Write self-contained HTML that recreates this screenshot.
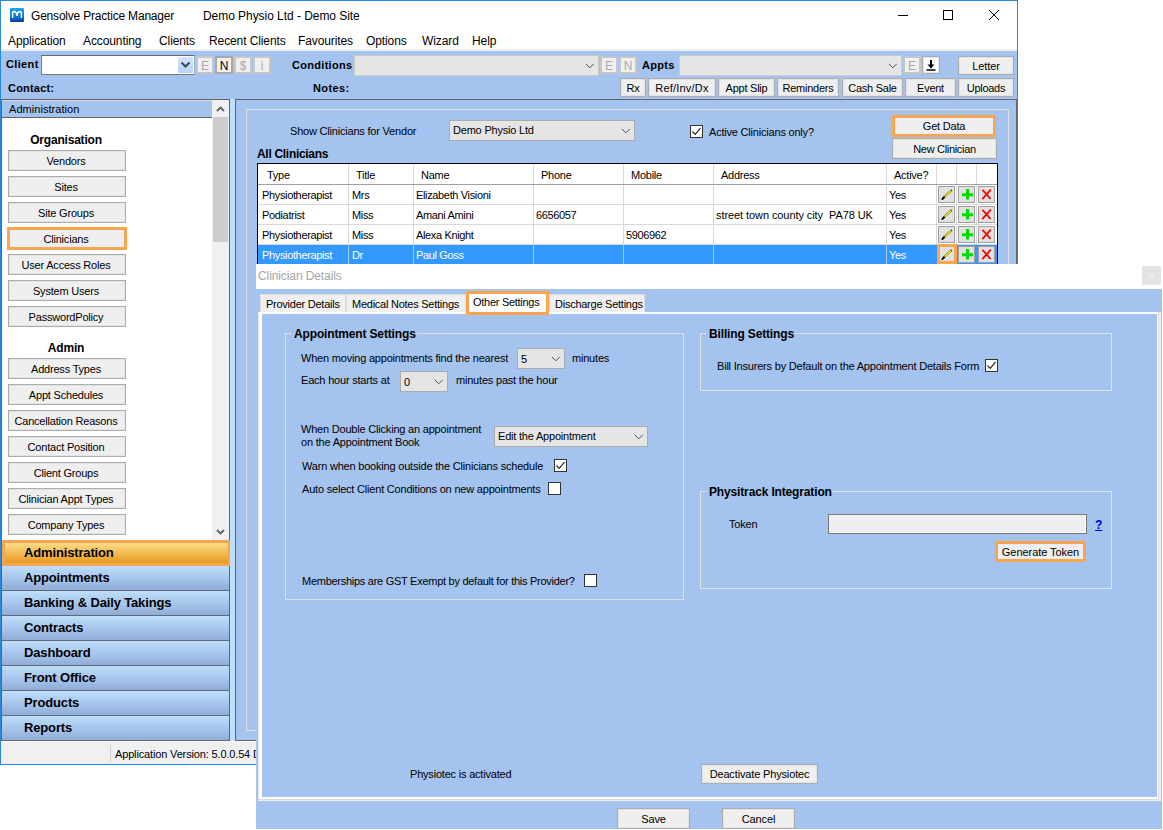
<!DOCTYPE html>
<html><head><meta charset="utf-8"><style>
html,body{margin:0;padding:0;width:1163px;height:830px;overflow:hidden;background:#fff}
body{position:relative;font-family:"Liberation Sans",sans-serif}
body>div,body>svg{position:absolute}
.t{white-space:nowrap}
</style></head><body>
<div style="left:0;top:0;width:1163px;height:830px;background:#fff"></div>
<div style="left:0px;top:0px;width:1018px;height:765px;box-sizing:border-box;border:1px solid #2b87d8;background:#fff"></div>
<svg style="left:10px;top:8px" width="14" height="14" viewBox="0 0 14 14"><defs><linearGradient id="ig" x1="0" y1="0" x2="0" y2="1"><stop offset="0" stop-color="#1ea6ee"/><stop offset="0.8" stop-color="#0a62c0"/><stop offset="1" stop-color="#06338a"/></linearGradient></defs><rect x="0" y="0" width="14" height="14" rx="1.2" fill="url(#ig)"/><path d="M2.6 9.8 L2.6 4.6 Q3.2 3 5 3.6 L7 5.6 L9 3.6 Q10.8 3 11.4 4.6 L11.4 9.8" fill="none" stroke="#fff" stroke-width="1.5"/><circle cx="7" cy="6.8" r="1.2" fill="#f4f4f4"/></svg>
<div class="t" style="left:31px;top:9.84px;font-size:12px;line-height:12px;font-weight:400;color:#000;letter-spacing:-0.2px;">Gensolve Practice Manager</div>
<div class="t" style="left:203px;top:9.84px;font-size:12px;line-height:12px;font-weight:400;color:#000;letter-spacing:-0.05px;">Demo Physio Ltd - Demo Site</div>
<div style="left:898px;top:15px;width:10px;height:1px;background:#000"></div>
<div style="left:943px;top:10px;width:10px;height:10px;box-sizing:border-box;border:1px solid #000"></div>
<svg style="left:988px;top:9px" width="12" height="12" viewBox="0 0 12 12"><path d="M1 1 L11 11 M11 1 L1 11" stroke="#000" stroke-width="1"/></svg>
<div class="t" style="left:8px;top:34.84px;font-size:12px;line-height:12px;font-weight:400;color:#000;letter-spacing:-0.1px;">Application</div>
<div class="t" style="left:83px;top:34.84px;font-size:12px;line-height:12px;font-weight:400;color:#000;letter-spacing:-0.1px;">Accounting</div>
<div class="t" style="left:159px;top:34.84px;font-size:12px;line-height:12px;font-weight:400;color:#000;letter-spacing:-0.1px;">Clients</div>
<div class="t" style="left:209px;top:34.84px;font-size:12px;line-height:12px;font-weight:400;color:#000;letter-spacing:-0.1px;">Recent Clients</div>
<div class="t" style="left:298px;top:34.84px;font-size:12px;line-height:12px;font-weight:400;color:#000;letter-spacing:-0.1px;">Favourites</div>
<div class="t" style="left:366px;top:34.84px;font-size:12px;line-height:12px;font-weight:400;color:#000;letter-spacing:-0.1px;">Options</div>
<div class="t" style="left:422px;top:34.84px;font-size:12px;line-height:12px;font-weight:400;color:#000;letter-spacing:-0.1px;">Wizard</div>
<div class="t" style="left:472px;top:34.84px;font-size:12px;line-height:12px;font-weight:400;color:#000;letter-spacing:-0.1px;">Help</div>
<div style="left:1px;top:49px;width:1016px;height:2px;background:#eeeeee"></div>
<div style="left:1px;top:51px;width:1016px;height:48px;background:#a4c3ee"></div>
<div class="t" style="left:6px;top:58.69px;font-size:11px;line-height:11px;font-weight:700;color:#000;letter-spacing:0.35px;">Client</div>
<div style="left:41px;top:55px;width:154px;height:20px;box-sizing:border-box;border:1px solid #7a7a7a;border-right-color:#7eb4ea;border-top-color:#6a6a6a;background:#fff"></div>
<div style="left:178px;top:57px;width:15px;height:16px;background:linear-gradient(#d6e5fa,#b9d1f5);border-radius:1px"></div>
<svg style="left:180px;top:61px" width="11" height="8" viewBox="0 0 11 8"><path d="M1.5 1.5 L5.5 5.5 L9.5 1.5" fill="none" stroke="#3d4a5c" stroke-width="2"/></svg>
<div style="left:196px;top:56px;width:18px;height:18px;box-sizing:border-box;border:2px solid #c6c6c6;background:#f0f0f0"></div>
<div class="t" style="left:5px;width:400px;text-align:center;top:59.84px;font-size:12px;line-height:12px;font-weight:400;color:#a8a8a8;letter-spacing:0px;">E</div>
<div style="left:215px;top:56px;width:18px;height:18px;box-sizing:border-box;border:2px solid #a9a9a9;background:#f0f0f0"></div>
<div class="t" style="left:24px;width:400px;text-align:center;top:59.84px;font-size:12px;line-height:12px;font-weight:400;color:#000;letter-spacing:0px;">N</div>
<div style="left:234px;top:56px;width:18px;height:18px;box-sizing:border-box;border:2px solid #c6c6c6;background:#f0f0f0"></div>
<div class="t" style="left:43px;width:400px;text-align:center;top:59.84px;font-size:12px;line-height:12px;font-weight:400;color:#a8a8a8;letter-spacing:0px;">$</div>
<div style="left:253px;top:56px;width:18px;height:18px;box-sizing:border-box;border:2px solid #c6c6c6;background:#f0f0f0"></div>
<div class="t" style="left:62px;width:400px;text-align:center;top:59.84px;font-size:12px;line-height:12px;font-weight:400;color:#a8a8a8;letter-spacing:0px;">i</div>
<div class="t" style="left:292px;top:59.69px;font-size:11px;line-height:11px;font-weight:700;color:#000;letter-spacing:0.3px;">Conditions</div>
<div style="left:354px;top:55px;width:245px;height:21px;box-sizing:border-box;border:1px solid #cccccc;background:#e5e5e5"></div>
<svg style="left:585px;top:63px" width="10" height="6" viewBox="0 0 10 6"><path d="M0.8 0.8 L4.8 4.8 L8.8 0.8" fill="none" stroke="#505050" stroke-width="1"/></svg>
<div style="left:600px;top:56px;width:18px;height:18px;box-sizing:border-box;border:2px solid #c6c6c6;background:#f0f0f0"></div>
<div class="t" style="left:409px;width:400px;text-align:center;top:59.84px;font-size:12px;line-height:12px;font-weight:400;color:#a8a8a8;letter-spacing:0px;">E</div>
<div style="left:619px;top:56px;width:18px;height:18px;box-sizing:border-box;border:2px solid #c6c6c6;background:#f0f0f0"></div>
<div class="t" style="left:428px;width:400px;text-align:center;top:59.84px;font-size:12px;line-height:12px;font-weight:400;color:#a8a8a8;letter-spacing:0px;">N</div>
<div class="t" style="left:642px;top:59.69px;font-size:11px;line-height:11px;font-weight:700;color:#000;letter-spacing:0.3px;">Appts</div>
<div style="left:679px;top:55px;width:223px;height:21px;box-sizing:border-box;border:1px solid #cccccc;background:#e5e5e5"></div>
<svg style="left:888px;top:63px" width="10" height="6" viewBox="0 0 10 6"><path d="M0.8 0.8 L4.8 4.8 L8.8 0.8" fill="none" stroke="#505050" stroke-width="1"/></svg>
<div style="left:903px;top:56px;width:18px;height:18px;box-sizing:border-box;border:2px solid #c6c6c6;background:#f0f0f0"></div>
<div class="t" style="left:712px;width:400px;text-align:center;top:59.84px;font-size:12px;line-height:12px;font-weight:400;color:#a8a8a8;letter-spacing:0px;">E</div>
<div style="left:922px;top:56px;width:18px;height:18px;box-sizing:border-box;border:1px solid #adadad;background:#fff;box-shadow:inset 0 0 0 1px #e6e6e6"></div>
<svg style="left:924px;top:58px" width="14" height="14" viewBox="0 0 14 14"><path d="M7 2 V10" stroke="#000" stroke-width="2"/><path d="M3.5 6.5 L7 10.5 L10.5 6.5 Z" fill="#000"/><path d="M2.5 12 H11.5" stroke="#000" stroke-width="1.5"/></svg>
<div style="left:958px;top:56px;width:56px;height:19px;box-sizing:border-box;border:1px solid #adadad;background:#efefef;box-shadow:inset 0 0 0 1px #e3e3e3"></div>
<div class="t" style="left:786.0px;width:400px;text-align:center;top:60.69px;font-size:11px;line-height:11px;font-weight:400;color:#000;letter-spacing:-0.1px;">Letter</div>
<div class="t" style="left:8px;top:82.69px;font-size:11px;line-height:11px;font-weight:700;color:#000;letter-spacing:0.2px;">Contact:</div>
<div class="t" style="left:313px;top:82.69px;font-size:11px;line-height:11px;font-weight:700;color:#000;letter-spacing:0.4px;">Notes:</div>
<div style="left:620px;top:78px;width:26px;height:19px;box-sizing:border-box;border:1px solid #adadad;background:#efefef;box-shadow:inset 0 0 0 1px #e3e3e3"></div>
<div class="t" style="left:433.0px;width:400px;text-align:center;top:82.69px;font-size:11px;line-height:11px;font-weight:400;color:#000;letter-spacing:-0.25px;">Rx</div>
<div style="left:648px;top:78px;width:68px;height:19px;box-sizing:border-box;border:1px solid #adadad;background:#efefef;box-shadow:inset 0 0 0 1px #e3e3e3"></div>
<div class="t" style="left:482.0px;width:400px;text-align:center;top:82.69px;font-size:11px;line-height:11px;font-weight:400;color:#000;letter-spacing:0.2px;">Ref/Inv/Dx</div>
<div style="left:718px;top:78px;width:57px;height:19px;box-sizing:border-box;border:1px solid #adadad;background:#efefef;box-shadow:inset 0 0 0 1px #e3e3e3"></div>
<div class="t" style="left:546.5px;width:400px;text-align:center;top:82.69px;font-size:11px;line-height:11px;font-weight:400;color:#000;letter-spacing:-0.25px;">Appt Slip</div>
<div style="left:777px;top:78px;width:62px;height:19px;box-sizing:border-box;border:1px solid #adadad;background:#efefef;box-shadow:inset 0 0 0 1px #e3e3e3"></div>
<div class="t" style="left:608.0px;width:400px;text-align:center;top:82.69px;font-size:11px;line-height:11px;font-weight:400;color:#000;letter-spacing:-0.25px;">Reminders</div>
<div style="left:842px;top:78px;width:61px;height:19px;box-sizing:border-box;border:1px solid #adadad;background:#efefef;box-shadow:inset 0 0 0 1px #e3e3e3"></div>
<div class="t" style="left:672.5px;width:400px;text-align:center;top:82.69px;font-size:11px;line-height:11px;font-weight:400;color:#000;letter-spacing:-0.25px;">Cash Sale</div>
<div style="left:905px;top:78px;width:51px;height:19px;box-sizing:border-box;border:1px solid #adadad;background:#efefef;box-shadow:inset 0 0 0 1px #e3e3e3"></div>
<div class="t" style="left:730.5px;width:400px;text-align:center;top:82.69px;font-size:11px;line-height:11px;font-weight:400;color:#000;letter-spacing:-0.25px;">Event</div>
<div style="left:958px;top:78px;width:56px;height:19px;box-sizing:border-box;border:1px solid #adadad;background:#efefef;box-shadow:inset 0 0 0 1px #e3e3e3"></div>
<div class="t" style="left:786.0px;width:400px;text-align:center;top:82.69px;font-size:11px;line-height:11px;font-weight:400;color:#000;letter-spacing:-0.3px;">Uploads</div>
<div style="left:1px;top:99px;width:229px;height:642px;box-sizing:border-box;border:1px solid #646464;border-right-color:#646464;background:#fff"></div>
<div style="left:2px;top:100px;width:210px;height:17px;background:#a4c3ee"></div>
<div style="left:2px;top:117px;width:210px;height:1px;background:#646464"></div>
<div style="left:2px;top:100px;width:210px;height:1px;background:#d6dbe2"></div>
<div class="t" style="left:9px;top:103.69px;font-size:11px;line-height:11px;font-weight:400;color:#000;letter-spacing:0.05px;">Administration</div>
<div style="left:212px;top:100px;width:17px;height:440px;background:#f0f0f0"></div>
<div style="left:213px;top:117px;width:15px;height:125px;background:#cdcdcd"></div>
<svg style="left:215px;top:105px" width="11" height="8" viewBox="0 0 11 8"><path d="M2 6 L5.5 2.5 L9 6" fill="none" stroke="#606060" stroke-width="1.8"/></svg>
<svg style="left:215px;top:528px" width="11" height="8" viewBox="0 0 11 8"><path d="M2 2 L5.5 5.5 L9 2" fill="none" stroke="#606060" stroke-width="1.8"/></svg>
<div class="t" style="left:-134px;width:400px;text-align:center;top:133.84px;font-size:12px;line-height:12px;font-weight:700;color:#000;letter-spacing:-0.2px;">Organisation</div>
<div style="left:8px;top:150px;width:118px;height:21px;box-sizing:border-box;border:1px solid #adadad;background:#efefef;box-shadow:inset 0 0 0 1px #e3e3e3"></div>
<div class="t" style="left:-134.0px;width:400px;text-align:center;top:155.69px;font-size:11px;line-height:11px;font-weight:400;color:#000;letter-spacing:-0.2px;">Vendors</div>
<div style="left:8px;top:176px;width:118px;height:21px;box-sizing:border-box;border:1px solid #adadad;background:#efefef;box-shadow:inset 0 0 0 1px #e3e3e3"></div>
<div class="t" style="left:-134.0px;width:400px;text-align:center;top:181.69px;font-size:11px;line-height:11px;font-weight:400;color:#000;letter-spacing:-0.2px;">Sites</div>
<div style="left:8px;top:202px;width:118px;height:21px;box-sizing:border-box;border:1px solid #adadad;background:#efefef;box-shadow:inset 0 0 0 1px #e3e3e3"></div>
<div class="t" style="left:-134.0px;width:400px;text-align:center;top:207.69px;font-size:11px;line-height:11px;font-weight:400;color:#000;letter-spacing:-0.2px;">Site Groups</div>
<div style="left:7px;top:227px;width:120px;height:23px;box-sizing:border-box;border:3px solid #fba54f;background:#efefef;box-shadow:inset 0 0 0 1px #e6edf6"></div>
<div class="t" style="left:-134.0px;width:400px;text-align:center;top:233.69px;font-size:11px;line-height:11px;font-weight:400;color:#000;letter-spacing:-0.2px;">Clinicians</div>
<div style="left:8px;top:254px;width:118px;height:21px;box-sizing:border-box;border:1px solid #adadad;background:#efefef;box-shadow:inset 0 0 0 1px #e3e3e3"></div>
<div class="t" style="left:-134.0px;width:400px;text-align:center;top:259.69px;font-size:11px;line-height:11px;font-weight:400;color:#000;letter-spacing:-0.2px;">User Access Roles</div>
<div style="left:8px;top:280px;width:118px;height:21px;box-sizing:border-box;border:1px solid #adadad;background:#efefef;box-shadow:inset 0 0 0 1px #e3e3e3"></div>
<div class="t" style="left:-134.0px;width:400px;text-align:center;top:285.69px;font-size:11px;line-height:11px;font-weight:400;color:#000;letter-spacing:-0.2px;">System Users</div>
<div style="left:8px;top:306px;width:118px;height:21px;box-sizing:border-box;border:1px solid #adadad;background:#efefef;box-shadow:inset 0 0 0 1px #e3e3e3"></div>
<div class="t" style="left:-134.0px;width:400px;text-align:center;top:311.69px;font-size:11px;line-height:11px;font-weight:400;color:#000;letter-spacing:-0.2px;">PasswordPolicy</div>
<div class="t" style="left:-134px;width:400px;text-align:center;top:341.84px;font-size:12px;line-height:12px;font-weight:700;color:#000;letter-spacing:-0.2px;">Admin</div>
<div style="left:8px;top:358px;width:118px;height:21px;box-sizing:border-box;border:1px solid #adadad;background:#efefef;box-shadow:inset 0 0 0 1px #e3e3e3"></div>
<div class="t" style="left:-134.0px;width:400px;text-align:center;top:363.69px;font-size:11px;line-height:11px;font-weight:400;color:#000;letter-spacing:-0.2px;">Address Types</div>
<div style="left:8px;top:384px;width:118px;height:21px;box-sizing:border-box;border:1px solid #adadad;background:#efefef;box-shadow:inset 0 0 0 1px #e3e3e3"></div>
<div class="t" style="left:-134.0px;width:400px;text-align:center;top:389.69px;font-size:11px;line-height:11px;font-weight:400;color:#000;letter-spacing:-0.2px;">Appt Schedules</div>
<div style="left:8px;top:410px;width:118px;height:21px;box-sizing:border-box;border:1px solid #adadad;background:#efefef;box-shadow:inset 0 0 0 1px #e3e3e3"></div>
<div class="t" style="left:-134.0px;width:400px;text-align:center;top:415.69px;font-size:11px;line-height:11px;font-weight:400;color:#000;letter-spacing:-0.2px;">Cancellation Reasons</div>
<div style="left:8px;top:436px;width:118px;height:21px;box-sizing:border-box;border:1px solid #adadad;background:#efefef;box-shadow:inset 0 0 0 1px #e3e3e3"></div>
<div class="t" style="left:-134.0px;width:400px;text-align:center;top:441.69px;font-size:11px;line-height:11px;font-weight:400;color:#000;letter-spacing:-0.2px;">Contact Position</div>
<div style="left:8px;top:462px;width:118px;height:21px;box-sizing:border-box;border:1px solid #adadad;background:#efefef;box-shadow:inset 0 0 0 1px #e3e3e3"></div>
<div class="t" style="left:-134.0px;width:400px;text-align:center;top:467.69px;font-size:11px;line-height:11px;font-weight:400;color:#000;letter-spacing:-0.2px;">Client Groups</div>
<div style="left:8px;top:488px;width:118px;height:21px;box-sizing:border-box;border:1px solid #adadad;background:#efefef;box-shadow:inset 0 0 0 1px #e3e3e3"></div>
<div class="t" style="left:-134.0px;width:400px;text-align:center;top:493.69px;font-size:11px;line-height:11px;font-weight:400;color:#000;letter-spacing:-0.2px;">Clinician Appt Types</div>
<div style="left:8px;top:514px;width:118px;height:21px;box-sizing:border-box;border:1px solid #adadad;background:#efefef;box-shadow:inset 0 0 0 1px #e3e3e3"></div>
<div class="t" style="left:-134.0px;width:400px;text-align:center;top:519.69px;font-size:11px;line-height:11px;font-weight:400;color:#000;letter-spacing:-0.2px;">Company Types</div>
<div style="left:2px;top:540px;width:229px;height:26px;background:#f8a552"></div>
<div style="left:5px;top:543px;width:223px;height:20px;background:linear-gradient(#fbdc8a,#f0b548 60%,#e89a20)"></div>
<div class="t" style="left:24px;top:546.00px;font-size:13px;line-height:13px;font-weight:700;color:#000;letter-spacing:-0.15px;">Administration</div>
<div style="left:2px;top:566px;width:227px;height:24px;background:linear-gradient(#bedef9,#a6c4ec 55%,#91acd6)"></div>
<div style="left:2px;top:590px;width:227px;height:1px;background:#5d6b7d"></div>
<div class="t" style="left:24px;top:571.00px;font-size:13px;line-height:13px;font-weight:700;color:#000;letter-spacing:-0.15px;">Appointments</div>
<div style="left:2px;top:591px;width:227px;height:24px;background:linear-gradient(#bedef9,#a6c4ec 55%,#91acd6)"></div>
<div style="left:2px;top:615px;width:227px;height:1px;background:#5d6b7d"></div>
<div class="t" style="left:24px;top:596.00px;font-size:13px;line-height:13px;font-weight:700;color:#000;letter-spacing:-0.15px;">Banking &amp; Daily Takings</div>
<div style="left:2px;top:616px;width:227px;height:24px;background:linear-gradient(#bedef9,#a6c4ec 55%,#91acd6)"></div>
<div style="left:2px;top:640px;width:227px;height:1px;background:#5d6b7d"></div>
<div class="t" style="left:24px;top:621.00px;font-size:13px;line-height:13px;font-weight:700;color:#000;letter-spacing:-0.15px;">Contracts</div>
<div style="left:2px;top:641px;width:227px;height:24px;background:linear-gradient(#bedef9,#a6c4ec 55%,#91acd6)"></div>
<div style="left:2px;top:665px;width:227px;height:1px;background:#5d6b7d"></div>
<div class="t" style="left:24px;top:646.00px;font-size:13px;line-height:13px;font-weight:700;color:#000;letter-spacing:-0.15px;">Dashboard</div>
<div style="left:2px;top:666px;width:227px;height:24px;background:linear-gradient(#bedef9,#a6c4ec 55%,#91acd6)"></div>
<div style="left:2px;top:690px;width:227px;height:1px;background:#5d6b7d"></div>
<div class="t" style="left:24px;top:671.00px;font-size:13px;line-height:13px;font-weight:700;color:#000;letter-spacing:-0.15px;">Front Office</div>
<div style="left:2px;top:691px;width:227px;height:24px;background:linear-gradient(#bedef9,#a6c4ec 55%,#91acd6)"></div>
<div style="left:2px;top:715px;width:227px;height:1px;background:#5d6b7d"></div>
<div class="t" style="left:24px;top:696.00px;font-size:13px;line-height:13px;font-weight:700;color:#000;letter-spacing:-0.15px;">Products</div>
<div style="left:2px;top:716px;width:227px;height:24px;background:linear-gradient(#bedef9,#a6c4ec 55%,#91acd6)"></div>
<div style="left:2px;top:740px;width:227px;height:1px;background:#5d6b7d"></div>
<div class="t" style="left:24px;top:721.00px;font-size:13px;line-height:13px;font-weight:700;color:#000;letter-spacing:-0.15px;">Reports</div>
<div style="left:230px;top:99px;width:5px;height:642px;background:#bee0fa"></div>
<div style="left:1px;top:741px;width:1016px;height:23px;background:#f0f0f0"></div>
<div style="left:1px;top:741px;width:1016px;height:1px;background:#fbfbfb"></div>
<div style="left:110px;top:745px;width:1px;height:17px;background:#d0d0d0"></div>
<div class="t" style="left:115px;top:748.69px;font-size:11px;line-height:11px;font-weight:400;color:#000;letter-spacing:-0.15px;">Application Version: 5.0.0.54 D</div>
<div style="left:235px;top:99px;width:782px;height:642px;box-sizing:border-box;border:1px solid #646464;background:#a4c3ee"></div>
<div style="left:246px;top:109px;width:763px;height:622px;box-sizing:border-box;border:1px solid #dfdfdd"></div>
<div class="t" style="left:290px;top:125.69px;font-size:11px;line-height:11px;font-weight:400;color:#000;letter-spacing:-0.2px;">Show Clinicians for Vendor</div>
<div style="left:449px;top:120px;width:186px;height:21px;box-sizing:border-box;border:1px solid #acacac;background:#e5e5e5"></div>
<div class="t" style="left:453px;top:124.69px;font-size:11px;line-height:11px;font-weight:400;color:#000;letter-spacing:-0.2px;">Demo Physio Ltd</div>
<svg style="left:621px;top:128px" width="10" height="6" viewBox="0 0 10 6"><path d="M0.8 0.8 L4.8 4.8 L8.8 0.8" fill="none" stroke="#505050" stroke-width="1"/></svg>
<div style="left:690px;top:125px;width:13px;height:13px;box-sizing:border-box;border:1px solid #333;background:#fff"></div>
<svg style="left:690px;top:125px" width="13" height="13" viewBox="0 0 13 13"><path d="M2.5 6.5 L5.2 9.3 L10.5 3.2" fill="none" stroke="#222" stroke-width="1.2"/></svg>
<div class="t" style="left:709px;top:126.69px;font-size:11px;line-height:11px;font-weight:400;color:#000;letter-spacing:-0.2px;">Active Clinicians only?</div>
<div style="left:892px;top:115px;width:104px;height:22px;box-sizing:border-box;border:3px solid #fba54f;background:#efefef;box-shadow:inset 0 0 0 1px #e6edf6"></div>
<div class="t" style="left:744.0px;width:400px;text-align:center;top:120.69px;font-size:11px;line-height:11px;font-weight:400;color:#000;letter-spacing:-0.2px;">Get Data</div>
<div style="left:892px;top:138px;width:105px;height:21px;box-sizing:border-box;border:1px solid #adadad;background:#efefef;box-shadow:inset 0 0 0 1px #e3e3e3"></div>
<div class="t" style="left:744.5px;width:400px;text-align:center;top:143.69px;font-size:11px;line-height:11px;font-weight:400;color:#000;letter-spacing:-0.32px;">New Clinician</div>
<div class="t" style="left:257px;top:147.84px;font-size:12px;line-height:12px;font-weight:700;color:#000;letter-spacing:-0.3px;">All Clinicians</div>
<div style="left:257px;top:163px;width:741px;height:101px;background:#000"></div>
<div style="left:258px;top:164px;width:739px;height:100px;background:#fff"></div>
<div style="left:348px;top:164px;width:1px;height:100px;background:#d9d9d9"></div>
<div style="left:413px;top:164px;width:1px;height:100px;background:#d9d9d9"></div>
<div style="left:533px;top:164px;width:1px;height:100px;background:#d9d9d9"></div>
<div style="left:623px;top:164px;width:1px;height:100px;background:#d9d9d9"></div>
<div style="left:713px;top:164px;width:1px;height:100px;background:#d9d9d9"></div>
<div style="left:886px;top:164px;width:1px;height:100px;background:#d9d9d9"></div>
<div style="left:936px;top:164px;width:1px;height:100px;background:#d9d9d9"></div>
<div style="left:956px;top:164px;width:1px;height:100px;background:#d9d9d9"></div>
<div style="left:976px;top:164px;width:1px;height:100px;background:#d9d9d9"></div>
<div style="left:258px;top:184px;width:739px;height:1px;background:#a0a0a0"></div>
<div style="left:258px;top:204px;width:739px;height:1px;background:#d9d9d9"></div>
<div style="left:258px;top:224px;width:739px;height:1px;background:#d9d9d9"></div>
<div style="left:258px;top:244px;width:739px;height:1px;background:#d9d9d9"></div>
<div style="left:258px;top:245px;width:739px;height:19px;background:#3399ff"></div>
<div style="left:348px;top:245px;width:1px;height:19px;background:#a8c9ee"></div>
<div style="left:413px;top:245px;width:1px;height:19px;background:#a8c9ee"></div>
<div style="left:533px;top:245px;width:1px;height:19px;background:#a8c9ee"></div>
<div style="left:623px;top:245px;width:1px;height:19px;background:#a8c9ee"></div>
<div style="left:713px;top:245px;width:1px;height:19px;background:#a8c9ee"></div>
<div style="left:886px;top:245px;width:1px;height:19px;background:#a8c9ee"></div>
<div class="t" style="left:267px;top:169.69px;font-size:11px;line-height:11px;font-weight:400;color:#000;letter-spacing:-0.25px;">Type</div>
<div class="t" style="left:356px;top:169.69px;font-size:11px;line-height:11px;font-weight:400;color:#000;letter-spacing:-0.25px;">Title</div>
<div class="t" style="left:421px;top:169.69px;font-size:11px;line-height:11px;font-weight:400;color:#000;letter-spacing:-0.25px;">Name</div>
<div class="t" style="left:541px;top:169.69px;font-size:11px;line-height:11px;font-weight:400;color:#000;letter-spacing:-0.25px;">Phone</div>
<div class="t" style="left:631px;top:169.69px;font-size:11px;line-height:11px;font-weight:400;color:#000;letter-spacing:-0.25px;">Mobile</div>
<div class="t" style="left:721px;top:169.69px;font-size:11px;line-height:11px;font-weight:400;color:#000;letter-spacing:-0.25px;">Address</div>
<div class="t" style="left:894px;top:169.69px;font-size:11px;line-height:11px;font-weight:400;color:#000;letter-spacing:-0.25px;">Active?</div>
<div class="t" style="left:262px;top:189.69px;font-size:11px;line-height:11px;font-weight:400;color:#000;letter-spacing:-0.35px;">Physiotherapist</div>
<div class="t" style="left:352px;top:189.69px;font-size:11px;line-height:11px;font-weight:400;color:#000;letter-spacing:-0.35px;">Mrs</div>
<div class="t" style="left:416px;top:189.69px;font-size:11px;line-height:11px;font-weight:400;color:#000;letter-spacing:-0.35px;">Elizabeth Visioni</div>
<div class="t" style="left:889px;top:189.69px;font-size:11px;line-height:11px;font-weight:400;color:#000;letter-spacing:-0.35px;">Yes</div>
<div style="left:938px;top:186px;width:17px;height:17px;box-sizing:border-box;border:1px solid #a0a0a0;background:#e1e1e1"></div>
<div style="left:958px;top:186px;width:17px;height:17px;box-sizing:border-box;border:1px solid #a0a0a0;background:#e1e1e1"></div>
<div style="left:978px;top:186px;width:17px;height:17px;box-sizing:border-box;border:1px solid #a0a0a0;background:#e1e1e1"></div>
<svg style="left:938px;top:186px" width="17" height="17" viewBox="0 0 17 17"><path d="M5.6 11.5 L13.2 4.5" stroke="#505040" stroke-width="2.1" stroke-linecap="round"/><path d="M6.1 11 L13 4.7" stroke="#f8f000" stroke-width="1.3"/><path d="M4.3 13.1 L6.1 11.3" stroke="#000" stroke-width="1.8" stroke-linecap="round"/></svg>
<svg style="left:958px;top:186px" width="17" height="17" viewBox="0 0 17 17"><path d="M9.5 3 V13.6 M4 8.8 H15" stroke="#00dc00" stroke-width="3"/></svg>
<svg style="left:978px;top:186px" width="17" height="17" viewBox="0 0 17 17"><path d="M4.4 3.9 Q8.5 8 12.5 13 M12.8 3.7 Q8.6 8.4 4.3 13.1" fill="none" stroke="#ff0000" stroke-width="1.8"/></svg>
<div class="t" style="left:262px;top:209.69px;font-size:11px;line-height:11px;font-weight:400;color:#000;letter-spacing:-0.35px;">Podiatrist</div>
<div class="t" style="left:352px;top:209.69px;font-size:11px;line-height:11px;font-weight:400;color:#000;letter-spacing:-0.35px;">Miss</div>
<div class="t" style="left:416px;top:209.69px;font-size:11px;line-height:11px;font-weight:400;color:#000;letter-spacing:-0.35px;">Amani Amini</div>
<div class="t" style="left:536px;top:209.69px;font-size:11px;line-height:11px;font-weight:400;color:#000;letter-spacing:-0.35px;">6656057</div>
<div class="t" style="left:716px;top:209.69px;font-size:11px;line-height:11px;font-weight:400;color:#000;letter-spacing:-0.08px;">street town county city&nbsp; PA78 UK</div>
<div class="t" style="left:889px;top:209.69px;font-size:11px;line-height:11px;font-weight:400;color:#000;letter-spacing:-0.35px;">Yes</div>
<div style="left:938px;top:206px;width:17px;height:17px;box-sizing:border-box;border:1px solid #a0a0a0;background:#e1e1e1"></div>
<div style="left:958px;top:206px;width:17px;height:17px;box-sizing:border-box;border:1px solid #a0a0a0;background:#e1e1e1"></div>
<div style="left:978px;top:206px;width:17px;height:17px;box-sizing:border-box;border:1px solid #a0a0a0;background:#e1e1e1"></div>
<svg style="left:938px;top:206px" width="17" height="17" viewBox="0 0 17 17"><path d="M5.6 11.5 L13.2 4.5" stroke="#505040" stroke-width="2.1" stroke-linecap="round"/><path d="M6.1 11 L13 4.7" stroke="#f8f000" stroke-width="1.3"/><path d="M4.3 13.1 L6.1 11.3" stroke="#000" stroke-width="1.8" stroke-linecap="round"/></svg>
<svg style="left:958px;top:206px" width="17" height="17" viewBox="0 0 17 17"><path d="M9.5 3 V13.6 M4 8.8 H15" stroke="#00dc00" stroke-width="3"/></svg>
<svg style="left:978px;top:206px" width="17" height="17" viewBox="0 0 17 17"><path d="M4.4 3.9 Q8.5 8 12.5 13 M12.8 3.7 Q8.6 8.4 4.3 13.1" fill="none" stroke="#ff0000" stroke-width="1.8"/></svg>
<div class="t" style="left:262px;top:229.69px;font-size:11px;line-height:11px;font-weight:400;color:#000;letter-spacing:-0.35px;">Physiotherapist</div>
<div class="t" style="left:352px;top:229.69px;font-size:11px;line-height:11px;font-weight:400;color:#000;letter-spacing:-0.35px;">Miss</div>
<div class="t" style="left:416px;top:229.69px;font-size:11px;line-height:11px;font-weight:400;color:#000;letter-spacing:-0.35px;">Alexa Knight</div>
<div class="t" style="left:626px;top:229.69px;font-size:11px;line-height:11px;font-weight:400;color:#000;letter-spacing:-0.35px;">5906962</div>
<div class="t" style="left:889px;top:229.69px;font-size:11px;line-height:11px;font-weight:400;color:#000;letter-spacing:-0.35px;">Yes</div>
<div style="left:938px;top:226px;width:17px;height:17px;box-sizing:border-box;border:1px solid #a0a0a0;background:#e1e1e1"></div>
<div style="left:958px;top:226px;width:17px;height:17px;box-sizing:border-box;border:1px solid #a0a0a0;background:#e1e1e1"></div>
<div style="left:978px;top:226px;width:17px;height:17px;box-sizing:border-box;border:1px solid #a0a0a0;background:#e1e1e1"></div>
<svg style="left:938px;top:226px" width="17" height="17" viewBox="0 0 17 17"><path d="M5.6 11.5 L13.2 4.5" stroke="#505040" stroke-width="2.1" stroke-linecap="round"/><path d="M6.1 11 L13 4.7" stroke="#f8f000" stroke-width="1.3"/><path d="M4.3 13.1 L6.1 11.3" stroke="#000" stroke-width="1.8" stroke-linecap="round"/></svg>
<svg style="left:958px;top:226px" width="17" height="17" viewBox="0 0 17 17"><path d="M9.5 3 V13.6 M4 8.8 H15" stroke="#00dc00" stroke-width="3"/></svg>
<svg style="left:978px;top:226px" width="17" height="17" viewBox="0 0 17 17"><path d="M4.4 3.9 Q8.5 8 12.5 13 M12.8 3.7 Q8.6 8.4 4.3 13.1" fill="none" stroke="#ff0000" stroke-width="1.8"/></svg>
<div class="t" style="left:262px;top:249.69px;font-size:11px;line-height:11px;font-weight:400;color:#fff;letter-spacing:-0.35px;">Physiotherapist</div>
<div class="t" style="left:352px;top:249.69px;font-size:11px;line-height:11px;font-weight:400;color:#fff;letter-spacing:-0.35px;">Dr</div>
<div class="t" style="left:416px;top:249.69px;font-size:11px;line-height:11px;font-weight:400;color:#fff;letter-spacing:-0.35px;">Paul Goss</div>
<div class="t" style="left:889px;top:249.69px;font-size:11px;line-height:11px;font-weight:400;color:#fff;letter-spacing:-0.35px;">Yes</div>
<div style="left:937px;top:244px;width:20px;height:20px;box-sizing:border-box;border:3px solid #fba54f;background:#e1e1e1"></div>
<div style="left:958px;top:246px;width:17px;height:17px;box-sizing:border-box;border:1px solid #a0a0a0;background:#e1e1e1"></div>
<div style="left:978px;top:246px;width:17px;height:17px;box-sizing:border-box;border:1px solid #a0a0a0;background:#e1e1e1"></div>
<svg style="left:938px;top:246px" width="17" height="17" viewBox="0 0 17 17"><path d="M5.6 11.5 L13.2 4.5" stroke="#505040" stroke-width="2.1" stroke-linecap="round"/><path d="M6.1 11 L13 4.7" stroke="#f8f000" stroke-width="1.3"/><path d="M4.3 13.1 L6.1 11.3" stroke="#000" stroke-width="1.8" stroke-linecap="round"/></svg>
<svg style="left:958px;top:246px" width="17" height="17" viewBox="0 0 17 17"><path d="M9.5 3 V13.6 M4 8.8 H15" stroke="#00dc00" stroke-width="3"/></svg>
<svg style="left:978px;top:246px" width="17" height="17" viewBox="0 0 17 17"><path d="M4.4 3.9 Q8.5 8 12.5 13 M12.8 3.7 Q8.6 8.4 4.3 13.1" fill="none" stroke="#ff0000" stroke-width="1.8"/></svg>
<div style="left:256px;top:264px;width:906px;height:565px;background:#a4c3ee"></div>
<div style="left:256px;top:264px;width:906px;height:25px;background:#fff"></div>
<div class="t" style="left:258px;top:269.84px;font-size:12px;line-height:12px;font-weight:400;color:#a6a6a6;letter-spacing:-0.1px;">Clinician Details</div>
<div style="left:1142px;top:266px;width:19px;height:19px;background:#e3e3e3"></div>
<svg style="left:1148px;top:272px" width="8" height="8" viewBox="0 0 8 8"><path d="M1.2 1.2 L6.3 6.3 M6.3 1.2 L1.2 6.3" stroke="#f6f6f6" stroke-width="1"/></svg>
<div style="left:258px;top:312px;width:903px;height:489px;background:#f0f0f0"></div>
<div style="left:258px;top:312px;width:901px;height:489px;background:#dcdcdc"></div>
<div style="left:258px;top:312px;width:900px;height:487px;background:#fff"></div>
<div style="left:258px;top:313px;width:1px;height:486px;background:#e4e4e4"></div>
<div style="left:262px;top:314px;width:895px;height:483px;background:#a4c3ee"></div>
<div style="left:258px;top:800px;width:901px;height:1px;background:#ececec"></div>
<div style="left:260px;top:294px;width:86px;height:18px;box-sizing:border-box;border:1px solid #dcdcdc;border-bottom:none;background:#f0f0f0"></div>
<div class="t" style="left:266px;top:298.69px;font-size:11px;line-height:11px;font-weight:400;color:#000;letter-spacing:-0.25px;">Provider Details</div>
<div style="left:346px;top:294px;width:120px;height:18px;box-sizing:border-box;border:1px solid #dcdcdc;border-bottom:none;background:#f0f0f0"></div>
<div class="t" style="left:352px;top:298.69px;font-size:11px;line-height:11px;font-weight:400;color:#000;letter-spacing:-0.25px;">Medical Notes Settings</div>
<div style="left:549px;top:294px;width:96px;height:18px;box-sizing:border-box;border:1px solid #dcdcdc;border-bottom:none;background:#f0f0f0"></div>
<div class="t" style="left:555px;top:298.69px;font-size:11px;line-height:11px;font-weight:400;color:#000;letter-spacing:-0.25px;">Discharge Settings</div>
<div style="left:466px;top:291px;width:83px;height:24px;box-sizing:border-box;border:3px solid #fba54f;background:#fff"></div>
<div class="t" style="left:473px;top:296.69px;font-size:11px;line-height:11px;font-weight:400;color:#000;letter-spacing:-0.28px;">Other Settings</div>
<div style="left:285px;top:333px;width:399px;height:267px;box-sizing:border-box;border:1px solid #dfdfdd"></div>
<div style="left:291px;top:331px;width:126px;height:5px;background:#a4c3ee"></div>
<div class="t" style="left:294px;top:327.84px;font-size:12px;line-height:12px;font-weight:700;color:#000;letter-spacing:-0.15px;">Appointment Settings</div>
<div class="t" style="left:301px;top:352.69px;font-size:11px;line-height:11px;font-weight:400;color:#000;letter-spacing:-0.2px;">When moving appointments find the nearest</div>
<div style="left:517px;top:348px;width:48px;height:21px;box-sizing:border-box;border:1px solid #acacac;background:#e5e5e5"></div>
<div class="t" style="left:521px;top:353.69px;font-size:11px;line-height:11px;font-weight:400;color:#000;letter-spacing:-0.2px;">5</div>
<svg style="left:551px;top:356px" width="10" height="6" viewBox="0 0 10 6"><path d="M0.8 0.8 L4.8 4.8 L8.8 0.8" fill="none" stroke="#505050" stroke-width="1"/></svg>
<div class="t" style="left:572px;top:352.69px;font-size:11px;line-height:11px;font-weight:400;color:#000;letter-spacing:-0.2px;">minutes</div>
<div class="t" style="left:301px;top:374.69px;font-size:11px;line-height:11px;font-weight:400;color:#000;letter-spacing:-0.2px;">Each hour starts at</div>
<div style="left:400px;top:371px;width:48px;height:21px;box-sizing:border-box;border:1px solid #acacac;background:#e5e5e5"></div>
<div class="t" style="left:404px;top:376.69px;font-size:11px;line-height:11px;font-weight:400;color:#000;letter-spacing:-0.2px;">0</div>
<svg style="left:434px;top:379px" width="10" height="6" viewBox="0 0 10 6"><path d="M0.8 0.8 L4.8 4.8 L8.8 0.8" fill="none" stroke="#505050" stroke-width="1"/></svg>
<div class="t" style="left:456px;top:374.69px;font-size:11px;line-height:11px;font-weight:400;color:#000;letter-spacing:-0.2px;">minutes past the hour</div>
<div class="t" style="left:301px;top:423.69px;font-size:11px;line-height:11px;font-weight:400;color:#000;letter-spacing:-0.2px;">When Double Clicking an appointment</div>
<div class="t" style="left:301px;top:436.69px;font-size:11px;line-height:11px;font-weight:400;color:#000;letter-spacing:-0.2px;">on the Appointment Book</div>
<div style="left:494px;top:426px;width:154px;height:21px;box-sizing:border-box;border:1px solid #acacac;background:#e5e5e5"></div>
<div class="t" style="left:498px;top:430.69px;font-size:11px;line-height:11px;font-weight:400;color:#000;letter-spacing:-0.2px;">Edit the Appointment</div>
<svg style="left:634px;top:434px" width="10" height="6" viewBox="0 0 10 6"><path d="M0.8 0.8 L4.8 4.8 L8.8 0.8" fill="none" stroke="#505050" stroke-width="1"/></svg>
<div class="t" style="left:302px;top:460.69px;font-size:11px;line-height:11px;font-weight:400;color:#000;letter-spacing:-0.2px;">Warn when booking outside the Clinicians schedule</div>
<div style="left:554px;top:459px;width:13px;height:13px;box-sizing:border-box;border:1px solid #333;background:#fff"></div>
<svg style="left:554px;top:459px" width="13" height="13" viewBox="0 0 13 13"><path d="M2.5 6.5 L5.2 9.3 L10.5 3.2" fill="none" stroke="#222" stroke-width="1.2"/></svg>
<div class="t" style="left:302px;top:483.69px;font-size:11px;line-height:11px;font-weight:400;color:#000;letter-spacing:-0.2px;">Auto select Client Conditions on new appointments</div>
<div style="left:548px;top:482px;width:13px;height:13px;box-sizing:border-box;border:1px solid #333;background:#fff"></div>
<div class="t" style="left:302px;top:575.69px;font-size:11px;line-height:11px;font-weight:400;color:#000;letter-spacing:-0.27px;">Memberships are GST Exempt by default for this Provider?</div>
<div style="left:584px;top:574px;width:13px;height:13px;box-sizing:border-box;border:1px solid #333;background:#fff"></div>
<div style="left:700px;top:333px;width:412px;height:58px;box-sizing:border-box;border:1px solid #dfdfdd"></div>
<div style="left:706px;top:331px;width:89px;height:5px;background:#a4c3ee"></div>
<div class="t" style="left:709px;top:327.84px;font-size:12px;line-height:12px;font-weight:700;color:#000;letter-spacing:-0.15px;">Billing Settings</div>
<div class="t" style="left:717px;top:360.69px;font-size:11px;line-height:11px;font-weight:400;color:#000;letter-spacing:-0.2px;">Bill Insurers by Default on the Appointment Details Form</div>
<div style="left:985px;top:359px;width:13px;height:13px;box-sizing:border-box;border:1px solid #333;background:#fff"></div>
<svg style="left:985px;top:359px" width="13" height="13" viewBox="0 0 13 13"><path d="M2.5 6.5 L5.2 9.3 L10.5 3.2" fill="none" stroke="#222" stroke-width="1.2"/></svg>
<div style="left:700px;top:491px;width:412px;height:98px;box-sizing:border-box;border:1px solid #dfdfdd"></div>
<div style="left:706px;top:489px;width:126px;height:5px;background:#a4c3ee"></div>
<div class="t" style="left:709px;top:485.84px;font-size:12px;line-height:12px;font-weight:700;color:#000;letter-spacing:-0.15px;">Physitrack Integration</div>
<div class="t" style="left:729px;top:518.69px;font-size:11px;line-height:11px;font-weight:400;color:#000;letter-spacing:-0.2px;">Token</div>
<div style="left:828px;top:514px;width:259px;height:20px;box-sizing:border-box;border:1px solid #7a7a7a;background:#efefef;box-shadow:inset -1px -1px 0 #fff"></div>
<div class="t" style="left:1095px;top:518.84px;font-size:12px;line-height:12px;font-weight:700;color:#0000ee;letter-spacing:0px;"><u>?</u></div>
<div style="left:995px;top:541px;width:91px;height:21px;box-sizing:border-box;border:3px solid #fba54f;background:#efefef;box-shadow:inset 0 0 0 1px #e6edf6"></div>
<div class="t" style="left:840.5px;width:400px;text-align:center;top:546.69px;font-size:11px;line-height:11px;font-weight:400;color:#000;letter-spacing:-0.05px;">Generate Token</div>
<div class="t" style="left:410px;top:768.69px;font-size:11px;line-height:11px;font-weight:400;color:#000;letter-spacing:-0.2px;">Physiotec is activated</div>
<div style="left:701px;top:764px;width:117px;height:20px;box-sizing:border-box;border:1px solid #adadad;background:#efefef;box-shadow:inset 0 0 0 1px #e3e3e3"></div>
<div class="t" style="left:559.5px;width:400px;text-align:center;top:768.69px;font-size:11px;line-height:11px;font-weight:400;color:#000;letter-spacing:-0.15px;">Deactivate Physiotec</div>
<div style="left:617px;top:808px;width:73px;height:21px;box-sizing:border-box;border:1px solid #adadad;background:#efefef;box-shadow:inset 0 0 0 1px #e3e3e3"></div>
<div class="t" style="left:453.5px;width:400px;text-align:center;top:813.69px;font-size:11px;line-height:11px;font-weight:400;color:#000;letter-spacing:-0.1px;">Save</div>
<div style="left:722px;top:808px;width:73px;height:21px;box-sizing:border-box;border:1px solid #adadad;background:#efefef;box-shadow:inset 0 0 0 1px #e3e3e3"></div>
<div class="t" style="left:558.5px;width:400px;text-align:center;top:813.69px;font-size:11px;line-height:11px;font-weight:400;color:#000;letter-spacing:-0.1px;">Cancel</div>
</body></html>
